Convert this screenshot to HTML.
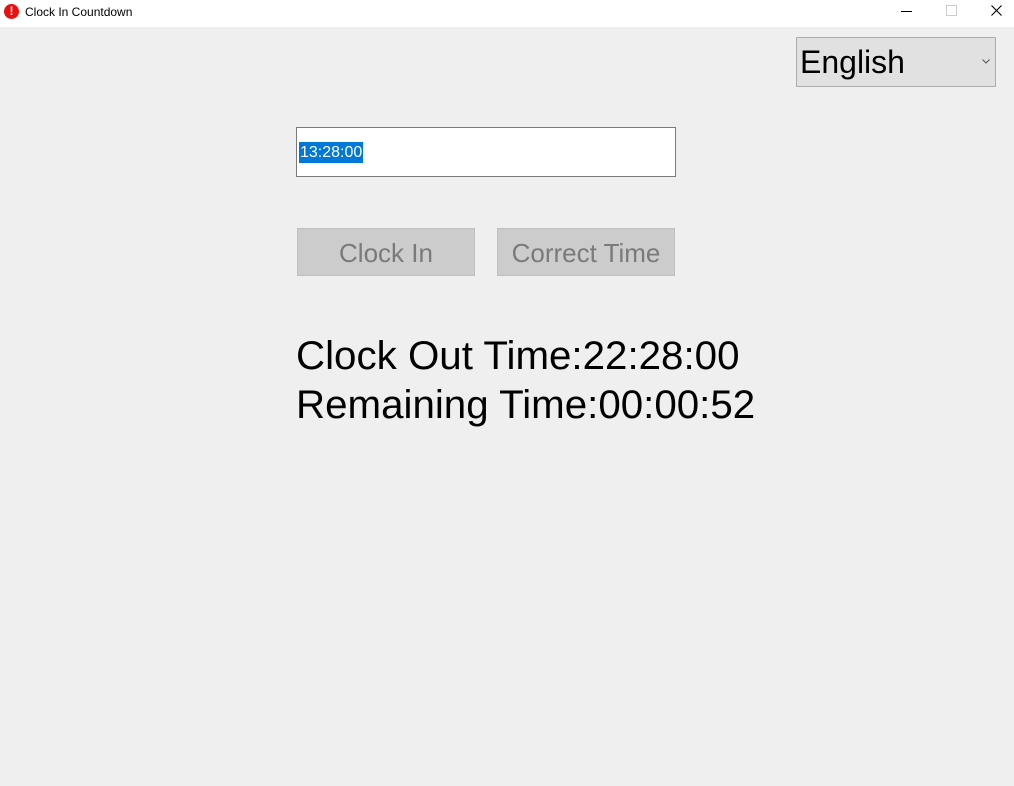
<!DOCTYPE html>
<html><head><style>
body{margin:0;width:1014px;height:786px;background:#efefef;position:relative;overflow:hidden;font-family:"Liberation Sans","DejaVu Sans",sans-serif}
.tb{position:absolute;left:0;top:0;width:1014px;height:27px;background:#fff}
.ab{position:absolute;white-space:nowrap}
</style></head><body>
<div class="tb">
 <div class="ab" style="left:4px;top:4px;width:15px;height:15px;border-radius:50%;background:#e81010;color:#fff;font-weight:bold;font-size:12px;line-height:15px;text-align:center">!</div>
 <div class="ab" style="left:25px;top:5px;font-size:12px;color:#000">Clock In Countdown</div>
 <div class="ab" style="left:901px;top:11px;width:11px;height:1px;background:#000"></div>
 <div class="ab" style="left:946px;top:5px;width:9px;height:9px;border:1px solid #ccc"></div>
 <svg class="ab" style="left:991px;top:5px" width="11" height="11"><path d="M0.5 0.5L10.5 10.5M10.5 0.5L0.5 10.5" stroke="#000" stroke-width="1.1"/></svg>
</div>
<div class="ab" style="left:796px;top:37px;width:198px;height:48px;border:1px solid #adadad;background:#e1e1e1"></div>
<div class="ab" style="left:800px;top:44px;font-size:32px;color:#000">English</div>
<svg class="ab" style="left:982px;top:59px" width="8" height="5"><path d="M0.5 0.5L4 4L7.5 0.5" stroke="#555" fill="none"/></svg>
<div class="ab" style="left:296px;top:127px;width:378px;height:48px;border:1px solid #7a7a7a;background:#fff"></div>
<div class="ab" style="left:299px;top:142px;height:21px;background:#0078d7;color:#fff;font-size:16px;line-height:21px;padding:0 1px">13:28:00</div>
<div class="ab" style="left:297px;top:228px;width:176px;height:46px;border:1px solid #bfbfbf;background:#cccccc;color:#7a7a7a;font-size:26px;line-height:48px;text-align:center">Clock In</div>
<div class="ab" style="left:497px;top:228px;width:176px;height:46px;border:1px solid #bfbfbf;background:#cccccc;color:#7a7a7a;font-size:26px;line-height:48px;text-align:center">Correct Time</div>
<div class="ab" style="left:296px;top:332px;font-size:40.3px;line-height:48px;color:#000">Clock Out Time:22:28:00</div>
<div class="ab" style="left:296px;top:381px;font-size:40.3px;line-height:48px;color:#000">Remaining Time:00:00:52</div>
</body></html>
